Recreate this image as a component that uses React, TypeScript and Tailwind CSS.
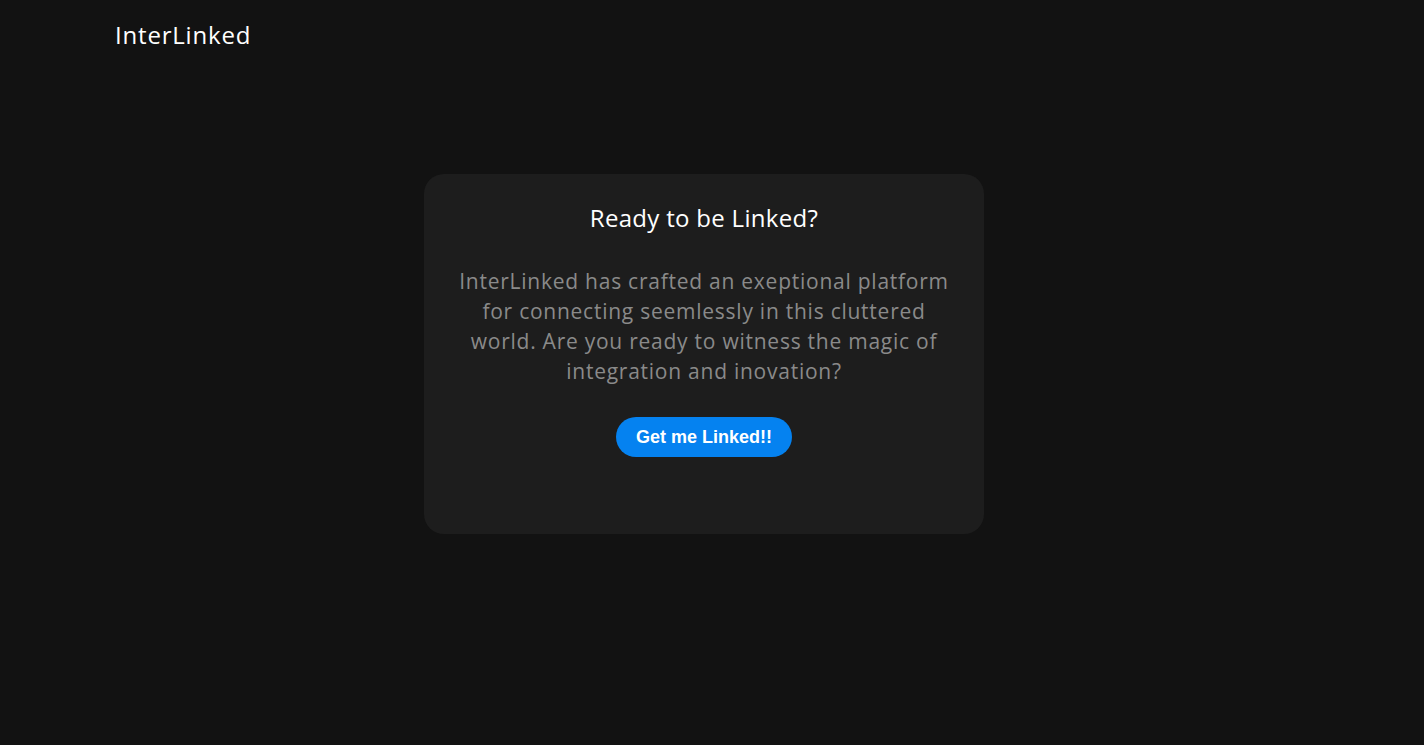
import React from "react";

export default function App() {
  return (
    <div className="min-h-[745px] w-full bg-[#121212]" style={{ fontFamily: '"Open Sans", sans-serif' }}>
      <header className="h-[70px] flex items-center px-[115px]">
        <span className="text-[24px] text-white font-normal tracking-[0.8px]">InterLinked</span>
      </header>
      <main className="flex justify-center mt-[104px] pr-[16px]">
        <div className="w-[560px] h-[360px] rounded-[20px] bg-[#1d1d1d] flex flex-col items-center pt-[28px]">
          <h1 className="text-[24px] leading-[32px] font-medium tracking-[0.3px] text-white">Ready to be Linked?</h1>
          <p className="mt-[32px] w-[500px] text-center text-[21px] tracking-[0.75px] leading-[30px] text-[#8a8a8a]">
            InterLinked has crafted an exeptional platform for connecting seemlessly in this cluttered world. Are you ready to witness the magic of integration and inovation?
          </p>
          <button
            className="mt-[31px] h-[40px] w-[176px] rounded-full bg-[#0582f0] text-white text-[18px] font-bold"
            style={{ fontFamily: '"Liberation Sans", Arial, sans-serif' }}
          >
            Get me Linked!!
          </button>
        </div>
      </main>
    </div>
  );
}
